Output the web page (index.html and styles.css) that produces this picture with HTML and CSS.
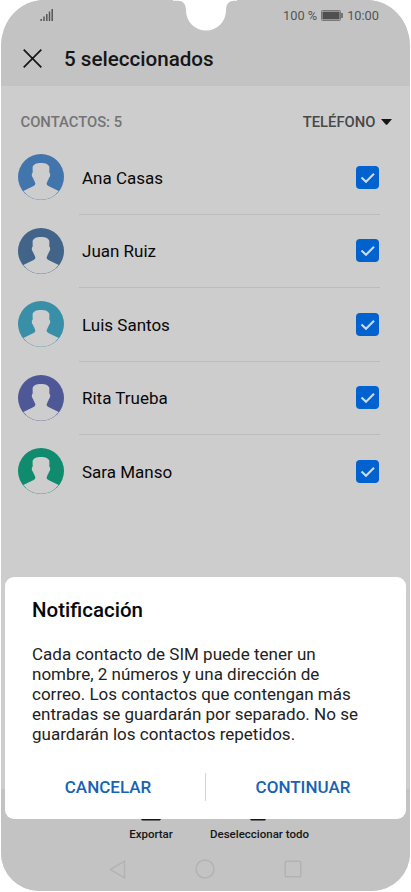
FILE: index.html
```
<!DOCTYPE html>
<html lang="es">
<head>
<meta charset="utf-8">
<title>5 seleccionados</title>
<link rel="stylesheet" href="styles.css">
</head>
<body>
<svg class="defs" width="0" height="0" aria-hidden="true">
  <symbol id="avatar" viewBox="0 0 46 46">
    <circle cx="23" cy="23" r="23" fill="currentColor"/>
    <path fill="#cdcdcd" d="M5.3 37 L15.6 32 Q17.6 31 17.3 29.3 L16.3 26.8 Q15.3 25.4 15 23.8 C13.9 23 13.6 20.6 14 19.4 L14.7 18.6 L14.6 13.4 C15 10.4 18.5 9 23 9 C27.5 9 31 10.4 31.4 13.4 L31.3 18.6 L32 19.4 C32.4 20.6 32.1 23 31 23.8 Q30.7 25.4 29.7 26.8 L28.7 29.3 Q28.4 31 30.4 32 L40.7 37 A22.1 22.1 0 0 1 5.3 37Z"/>
  </symbol>
  <symbol id="check" viewBox="0 0 23 23">
    <rect width="23" height="23" rx="4" fill="#0062cf"/>
    <path d="M5.5 11.5 L10 15.8 L18 7.8" fill="none" stroke="#cbdbec" stroke-width="2.1"/>
  </symbol>
</svg>
<main class="screen">
  <header class="top">
    <div class="status">
      <svg class="signal" width="14" height="12" viewBox="0 0 14 12"><path d="M1.2 12V10M4 12V7.5M6.8 12V5M9.5 12V2.5M12.2 12V0" stroke="#555" stroke-width="1.5"/></svg>
      <span class="percent">100 %</span>
      <svg class="battery" width="22" height="11" viewBox="0 0 22 11"><rect x=".5" y=".5" width="19" height="10" rx="1" fill="#b5b5b5" stroke="#777"/><rect x="1.5" y="1.7" width="17" height="7.6" fill="#505050"/><path d="M21 3v5" stroke="#555" stroke-width="1.4"/></svg>
      <span class="clock">10:00</span>
    </div>
    <div class="title-row">
      <svg width="19" height="19" viewBox="0 0 19 19"><path d="M.7.7 18.3 18.3M18.3.7.7 18.3" stroke="#161616" stroke-width="1.7"/></svg>
      <h1>5 seleccionados</h1>
    </div>
  </header>
  <div class="filter">
    <span class="count">CONTACTOS: 5</span>
    <span class="source">TELÉFONO</span>
    <svg class="caret" width="11" height="6" viewBox="0 0 11 6"><path d="M0 0H11L6.3 5.5Q5.5 6 4.7 5.5Z" fill="#161616"/></svg>
  </div>
  <ul class="contacts">
    <li><svg class="avatar blue"><use href="#avatar"/></svg><div class="row"><span>Ana Casas</span><svg class="check"><use href="#check"/></svg></div></li>
    <li><svg class="avatar slate"><use href="#avatar"/></svg><div class="row"><span>Juan Ruiz</span><svg class="check"><use href="#check"/></svg></div></li>
    <li><svg class="avatar teal"><use href="#avatar"/></svg><div class="row"><span>Luis Santos</span><svg class="check"><use href="#check"/></svg></div></li>
    <li><svg class="avatar indigo"><use href="#avatar"/></svg><div class="row"><span>Rita Trueba</span><svg class="check"><use href="#check"/></svg></div></li>
    <li><svg class="avatar green"><use href="#avatar"/></svg><div class="row"><span>Sara Manso</span><svg class="check"><use href="#check"/></svg></div></li>
  </ul>
  <footer class="bottom">
    <div class="actions">
      <div class="action export"><svg width="20" height="2"><path d="M0 0H20L19 1.5H1Z" fill="#161616"/></svg><span>Exportar</span></div>
      <div class="action deselect"><svg width="16" height="2"><path d="M0 0H16L15 1.5H1Z" fill="#161616"/></svg><span>Deseleccionar todo</span></div>
    </div>
    <nav class="keys">
      <svg width="17" height="19" viewBox="0 0 17 19"><path d="M15.5 1.2V17.8L1.3 9.5Z"/></svg>
      <svg width="20" height="20" viewBox="0 0 20 20"><circle cx="10" cy="10" r="9"/></svg>
      <svg width="18" height="18" viewBox="0 0 18 18"><rect x="1.2" y="1.2" width="15.6" height="15.6" rx=".8"/></svg>
    </nav>
  </footer>
  <section class="dialog" role="dialog">
    <h2>Notificación</h2>
    <p>Cada contacto de SIM puede tener un<br>nombre, 2 números y una dirección de<br>correo. Los contactos que contengan más<br>entradas se guardarán por separado. No se<br>guardarán los contactos repetidos.</p>
    <div class="buttons"><button>CANCELAR</button><i></i><button>CONTINUAR</button></div>
  </section>
  <svg class="notch" width="64" height="31" viewBox="0 0 64 31"><path d="M0 0V.7H5C10 .7 13 4 13 10.5A20 20 0 0 0 53 10.5C53 4 56 .7 61 .7H64V0Z" fill="#fff"/></svg>
</main>
</body>
</html>
```
FILE: styles.css
```
* { box-sizing: border-box; }
body { margin: 0; background: #fff; font-family: Roboto, sans-serif; color: #111; }
svg { display: block; flex: none; }
.defs { position: absolute; }
h1, h2, p, ul { margin: 0; padding: 0; font-weight: 400; }

.screen {
  position: relative;
  display: flex;
  flex-direction: column;
  width: 409px;
  height: 891px;
  margin: 0 1px;
  overflow: hidden;
  background: #cdcdcd;
  border-radius: 43px 43px 38px 38px / 46px 46px 38px 38px;
}

.top { height: 86px; background: #c3c3c3; }
.status { display: flex; align-items: center; height: 31px; padding: 0 31px 0 39px; font-size: 12.8px; line-height: 15px; color: #555; }
.signal { margin-top: -1px; }
.percent { margin-left: auto; margin-right: 4px; }
.clock { margin-left: 4px; }
.title-row { display: flex; align-items: center; height: 55px; padding-left: 21.5px; }
.title-row h1 { margin-left: 22.5px; font-size: 20.6px; font-weight: 500; line-height: 24px; color: #161616; }

.filter { display: flex; align-items: center; height: 54px; margin-top: 9px; padding: 0 18px 0 19.5px; font-size: 14.8px; font-weight: 500; }
.count { color: #747474; }
.source { margin-left: auto; margin-right: 5.5px; color: #484848; }
.caret { margin-top: -1px; }

.contacts { margin-top: -8px; list-style: none; }
.contacts li { display: flex; align-items: center; height: 73.5px; padding: 0 30px 0 17px; }
.avatar { width: 46px; height: 46px; margin: -1px 15px 0 0; }
.row { display: flex; flex: 1; align-items: center; justify-content: space-between; height: 73.5px; padding: 1px 1px 0 3px; border-bottom: 1px solid #bcbcbc; font-size: 17px; color: #080808; }
.contacts li:last-child .row { border-bottom-color: transparent; }
.check { width: 23px; height: 23px; margin-top: -1px; }
.blue { color: #4375ad; }
.slate { color: #426488; }
.teal { color: #388fa7; }
.indigo { color: #4e5896; }
.green { color: #118b6d; }

.bottom { height: 102px; margin-top: auto; padding-top: 30px; background: #c3c3c3; }
.actions { display: flex; padding-left: 120px; gap: 28px; }
.action { display: flex; flex-direction: column; align-items: center; width: 60px; font-size: 11.5px; font-weight: 500; line-height: 14px; white-space: nowrap; color: #161616; }
.action span { margin-top: 6px; }
.deselect { width: 101px; }
.deselect svg { margin-right: 3px; }
.keys { display: flex; align-items: center; justify-content: space-between; height: 20px; margin-top: 18px; padding: 0 108.5px 0 107.5px; fill: none; stroke: #b3b3b3; stroke-width: 1.5; }

.dialog { position: absolute; left: 4px; top: 577px; width: 401px; height: 242px; padding: 20px 5px 0 27px; border-radius: 9px; background: #fff; }
.dialog h2 { font-size: 20.5px; font-weight: 500; line-height: 26px; color: #080808; }
.dialog p { margin-top: 21px; font-size: 17.03px; line-height: 20.1px; white-space: nowrap; color: #222; }
.buttons { display: flex; align-items: center; height: 28px; margin: 28.5px 0 0 -22px; }
.buttons i { width: 1px; height: 28px; background: #d5d5d5; }
.buttons button { flex: 1 1 0; min-width: 0; padding: 0 0 0 1px; border: 0; background: none; font: 500 17px/20px Roboto, sans-serif; color: #1762b4; }
.buttons button:last-child { padding: 0 1px 0 0; }
.notch { position: absolute; left: 171.5px; top: 0; }
```
